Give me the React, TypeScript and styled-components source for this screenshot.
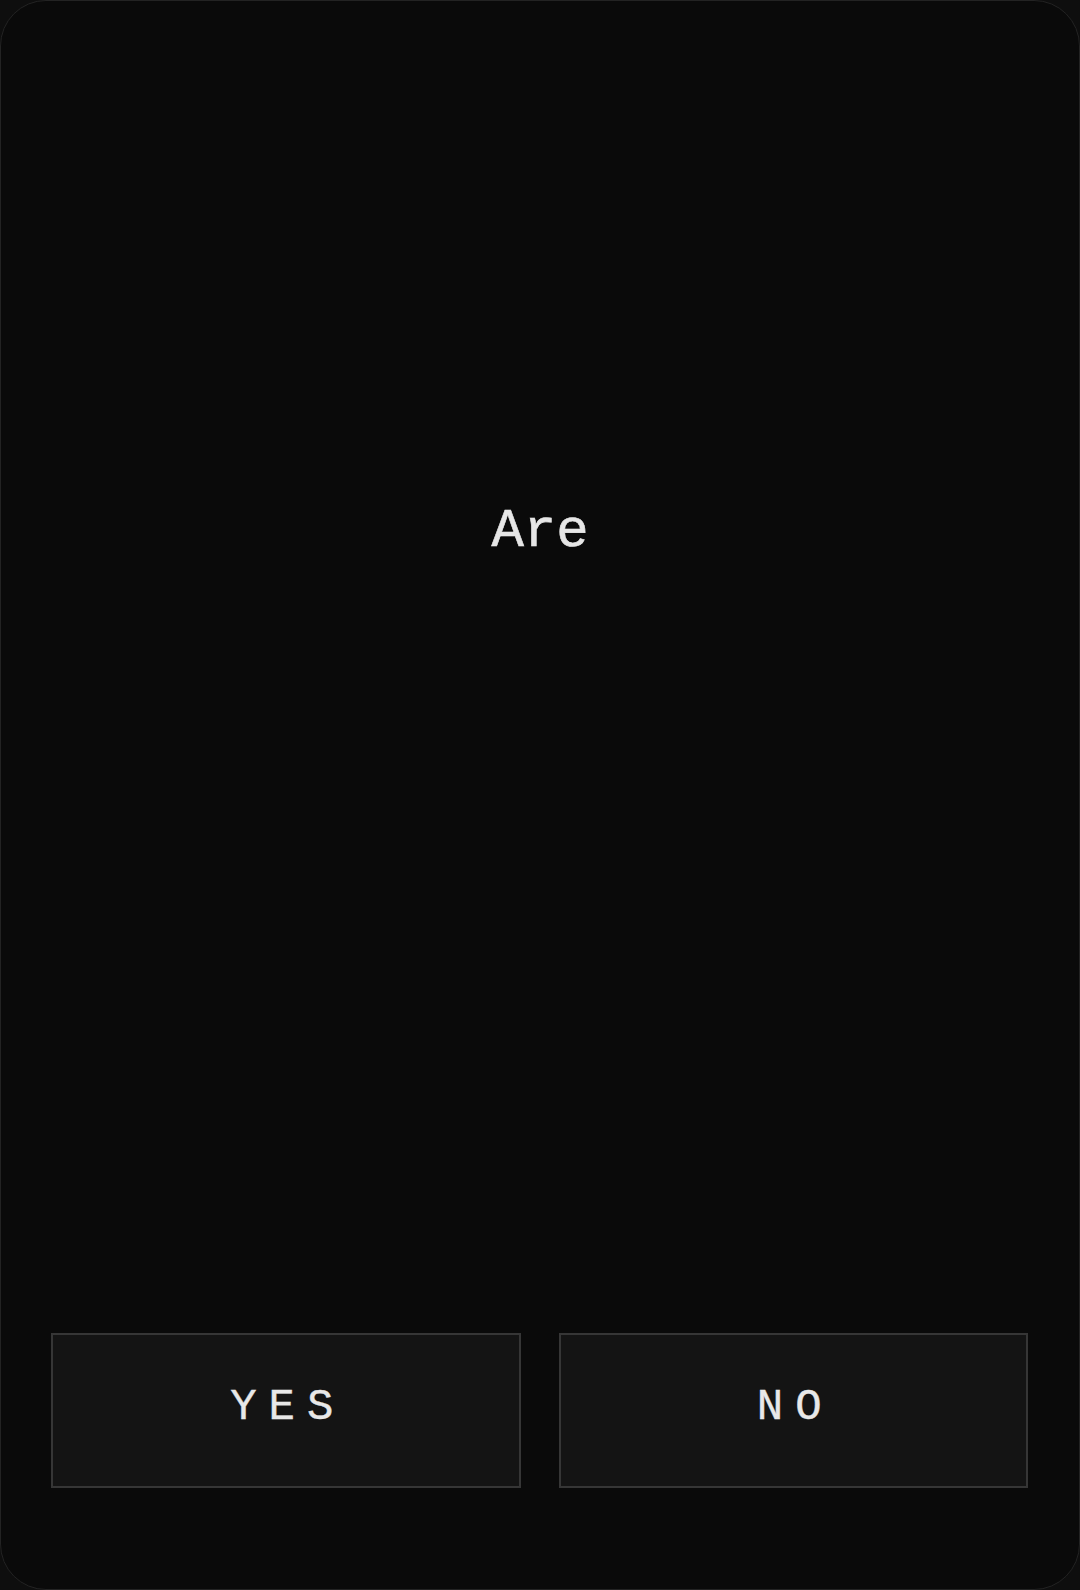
import React from 'react'
import styled, { createGlobalStyle } from 'styled-components'

const GlobalStyle = createGlobalStyle`
  html, body {
    margin: 0;
    padding: 0;
    background: #0e0e0e;
  }
  * {
    box-sizing: border-box;
  }
`

const Card = styled.div`
  width: 1080px;
  height: 1590px;
  display: flex;
  flex-direction: column;
  background: #0a0a0a;
  border: 1px solid #232323;
  border-radius: 46px;
  overflow: hidden;
`

const Message = styled.div`
  flex: 1;
  display: flex;
  align-items: center;
  justify-content: center;
  padding-bottom: 272px;
  font-family: 'Liberation Mono', monospace;
  font-size: 54px;
  color: #e6e6e6;
  -webkit-text-stroke: 0.6px #e6e6e6;
`

const Actions = styled.div`
  display: flex;
  gap: 38px;
  padding: 0 51px 101px 50px;
`

const ChoiceButton = styled.button`
  flex: 1;
  height: 155px;
  display: flex;
  align-items: center;
  justify-content: center;
  padding: 0 0 8px 4px;
  background: #141414;
  border: 2px solid #363636;
  border-radius: 0;
  font-family: 'Liberation Mono', monospace;
  font-size: 44px;
  letter-spacing: 12px;
  color: #e8e8e8;
  -webkit-text-stroke: 0.4px #e8e8e8;
  cursor: pointer;
`

const App = () => (
  <>
    <GlobalStyle />
    <Card>
      <Message>Are</Message>
      <Actions>
        <ChoiceButton>YES</ChoiceButton>
        <ChoiceButton>NO</ChoiceButton>
      </Actions>
    </Card>
  </>
)

export default App
